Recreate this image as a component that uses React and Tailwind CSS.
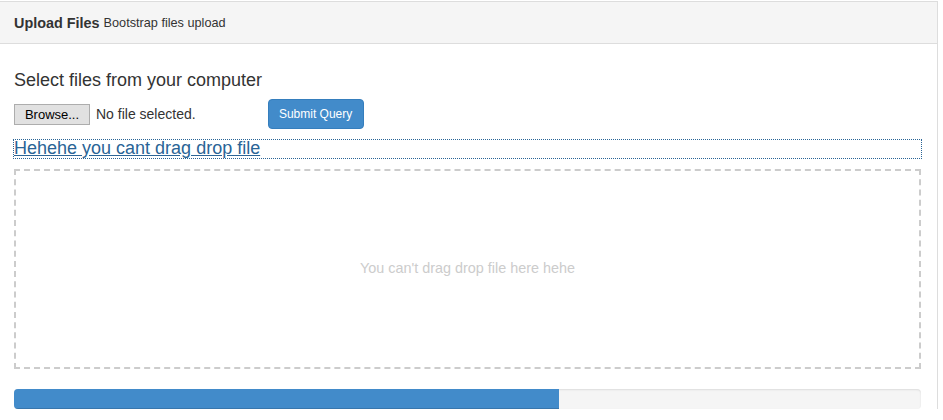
import React from 'react';

export default function App() {
  return (
    <div className="h-[420px] w-[943px] bg-white pt-px font-['Liberation_Sans',Arial,sans-serif] text-[14px] text-[#333]">
      <div className="w-[938px] border-t border-r border-[#ddd]">
        <div className="flex h-[42px] items-center border-b border-[#ddd] bg-[#f5f5f5] px-[14px] pt-[3px]">
          <span className="text-[14.4px] font-bold text-[#333]">Upload Files</span>
          <span className="ml-[4px] text-[12.7px] text-[#333]">Bootstrap files upload</span>
        </div>

        <div className="px-[14px] pt-[26px]">
          <h4 className="text-[18px] leading-[20px] text-[#333]">Select files from your computer</h4>

          <div className="mt-[9px] flex items-center">
            <button className="h-[21px] w-[76px] border border-[#adadad] bg-[#e1e1e1] text-[13px] leading-[19px] text-black">
              Browse...
            </button>
            <span className="ml-[6px] text-[14px] text-[#333]">No file selected.</span>
            <button className="ml-[72px] h-[30px] w-[96px] rounded-[4px] border border-[#357ebd] bg-[#428bca] text-[12px] text-white">
              Submit Query
            </button>
          </div>

          <div className="mt-[11px] h-[18px] w-[907px] outline-1 outline-dotted outline-[#2a6496]">
            <a href="#" className="block text-[18px] leading-[17px] text-[#2a6496] underline">
              Hehehe you cant drag drop file
            </a>
          </div>

          <div className="mt-[11px] flex h-[200px] w-[907px] items-center justify-center border-2 border-dashed border-[#ccc]">
            <span className="text-[14.4px] text-[#ccc]">You can't drag drop file here hehe</span>
          </div>

          <div className="mt-[20px] h-[20px] w-[907px] overflow-hidden rounded-[4px] bg-[#f5f5f5] shadow-[inset_0_1px_2px_rgba(0,0,0,0.1)]">
            <div
              className="h-full bg-[#428bca] shadow-[inset_0_-1px_0_rgba(0,0,0,0.15)]"
              style={{ width: '60.1%' }}
            />
          </div>
        </div>
      </div>
    </div>
  );
}
